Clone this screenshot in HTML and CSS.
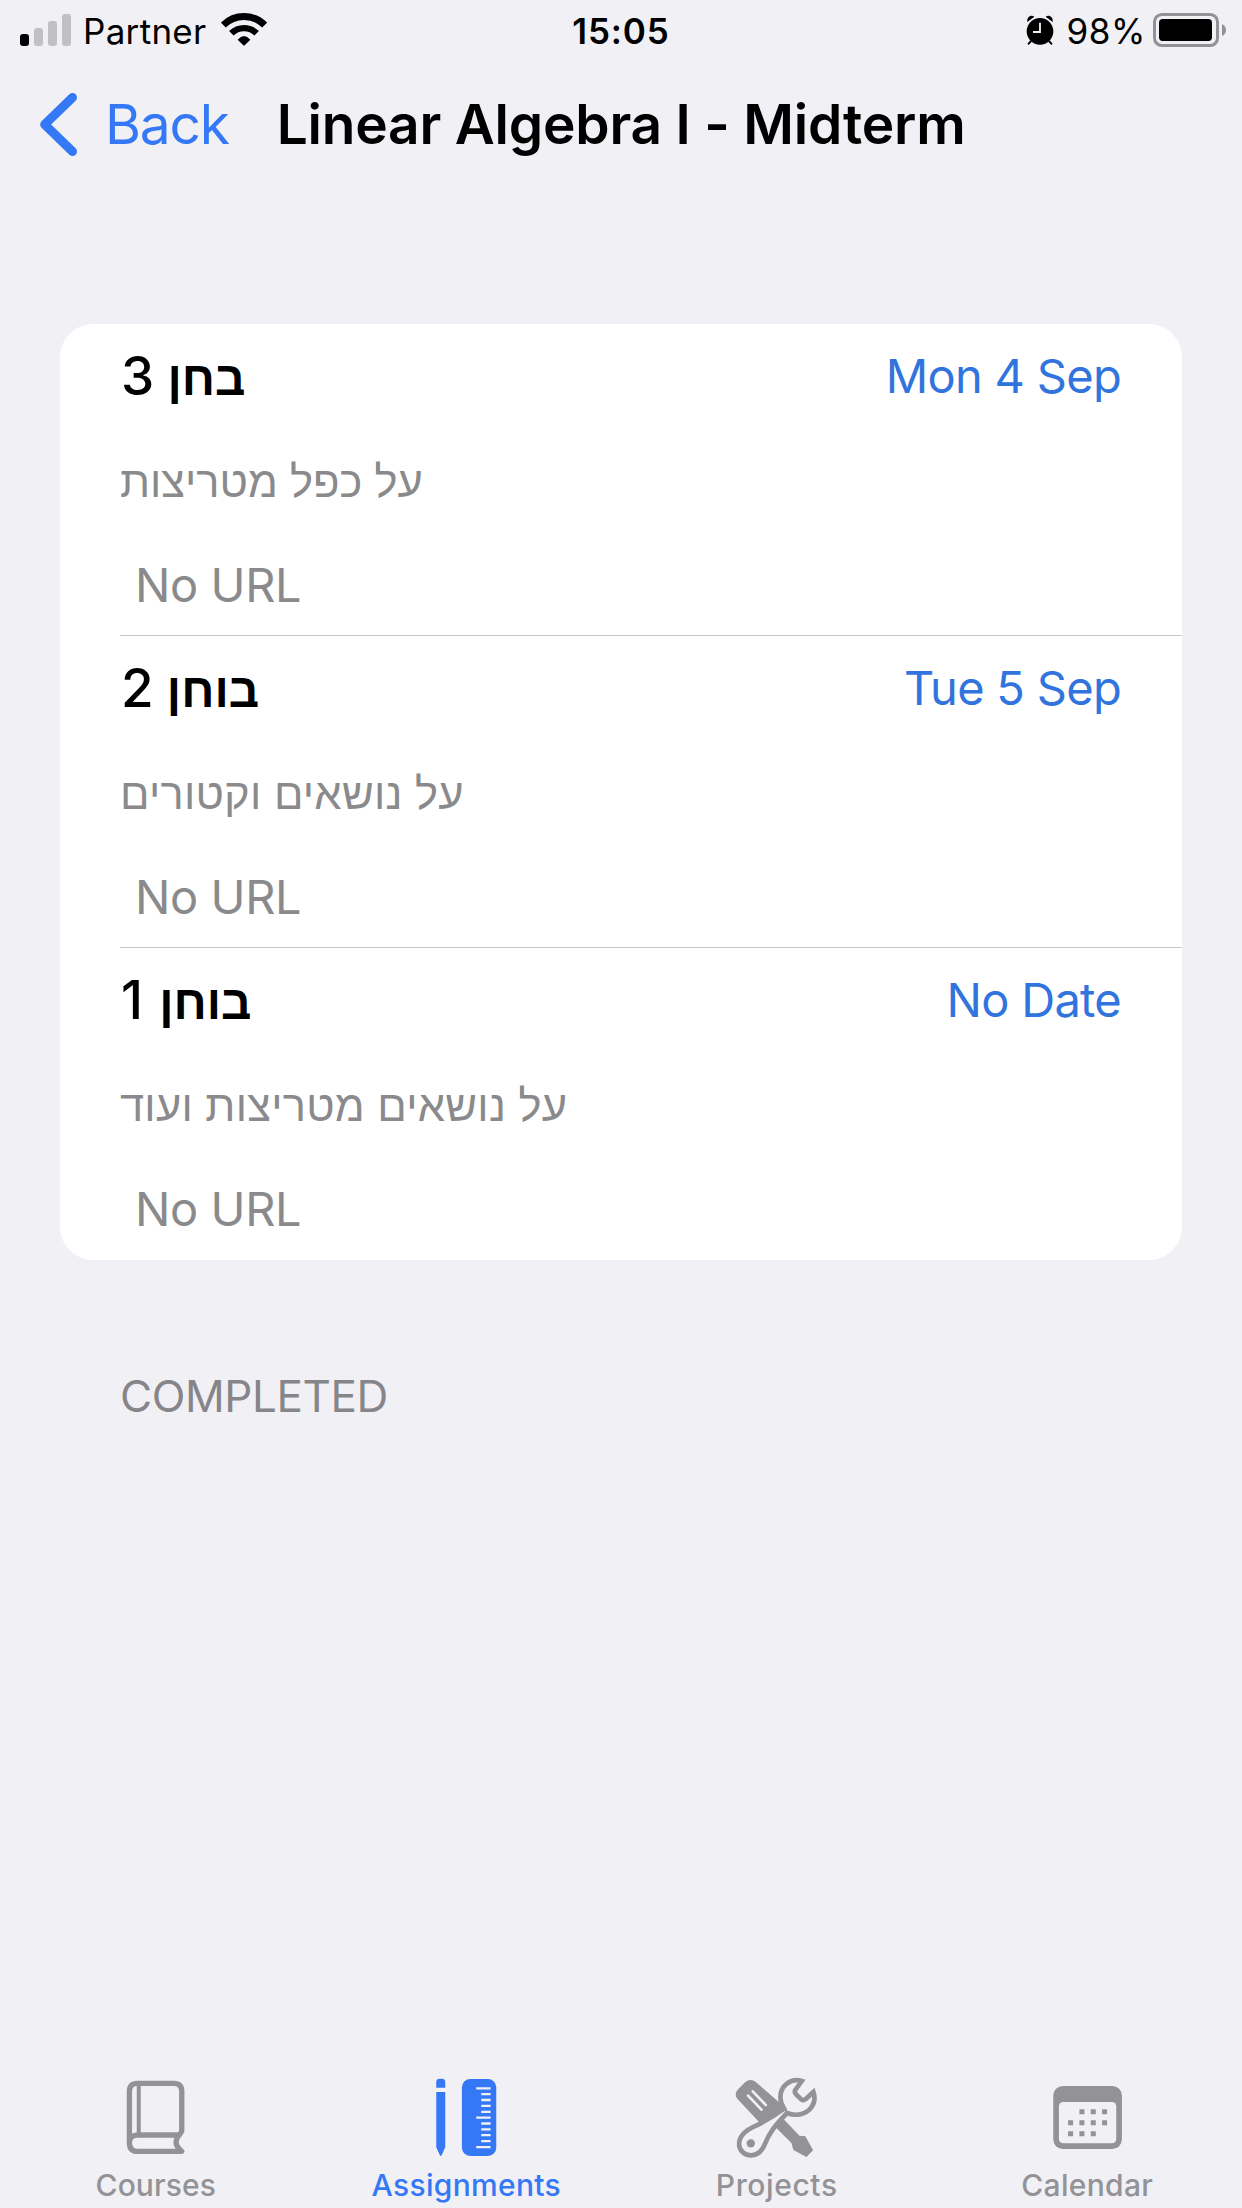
FILE: index.html
```html
<!DOCTYPE html>
<html lang="en">
<head>
<meta charset="utf-8">
<title>Linear Algebra I - Midterm</title>
<link rel="stylesheet" href="styles.css">
</head>
<body>
<div class="screen">
  <div class="status">
    <div class="status-left">
      <svg class="signal" viewBox="60 42 153 96" width="51" height="32">
        <rect x="60" y="102" width="27" height="36" rx="9"/>
        <g fill="#c1c0c5"><rect x="102" y="84" width="27" height="54" rx="9"/><rect x="144" y="63" width="27" height="75" rx="9"/><rect x="186" y="42" width="27" height="96" rx="9"/></g>
      </svg>
      <span class="carrier">Partner</span>
      <svg class="wifi" viewBox="660 36 138 102" width="46" height="34">
        <g fill="none" stroke="#000"><path d="M667 75A88 88 0 0 1 791 75" stroke-width="21"/><path d="M691 100A54 54 0 0 1 767 100" stroke-width="19"/></g>
        <path d="M710 119Q729 97 748 119L731 136Q729 138 727 136Z"/>
      </svg>
    </div>
    <span class="time">15:05</span>
    <div class="status-right">
      <svg class="alarm" viewBox="376 46 84 90" width="28" height="30">
        <circle cx="418" cy="95" r="40"/>
        <path d="M380 67C378 53 390 44 401 51ZM456 67C458 53 446 44 435 51Z"/>
        <path d="M393 122L384 132M443 122L452 132" stroke="#000" stroke-width="6" stroke-linecap="round"/>
        <path d="M418 69V97H397" fill="none" stroke="#f1f0f5" stroke-width="5.5"/>
      </svg>
      <span class="percent">98%</span>
      <svg class="battery" viewBox="759 39 219 102" width="73" height="34">
        <rect x="763.5" y="43.5" width="189" height="93" rx="22" fill="none" stroke="#929195" stroke-width="9"/>
        <rect x="777" y="57" width="159" height="66" rx="11"/>
        <path d="M966 72Q978 78 978 90T966 108Z" fill="#929195"/>
      </svg>
    </div>
  </div>

  <header class="nav">
    <svg class="chevron" viewBox="120 279 111 189" width="37" height="63"><path d="M217.500 292.500L134 373.500L217.500 454.500"/></svg>
    <span class="back">Back</span>
    <h1 class="title">Linear Algebra I - Midterm</h1>
  </header>

  <main class="content">
    <section class="card">
      <article class="row">
        <div class="row-head"><h2 class="name">בחן <span class="digit">3</span></h2><span class="date">Mon 4 Sep</span></div>
        <p class="desc">על כפל מטריצות</p>
        <p class="url">No URL</p>
      </article>
      <article class="row">
        <div class="row-head"><h2 class="name">בוחן <span class="digit">2</span></h2><span class="date">Tue 5 Sep</span></div>
        <p class="desc loose">על נושאים וקטורים</p>
        <p class="url">No URL</p>
      </article>
      <article class="row">
        <div class="row-head"><h2 class="name">בוחן <span class="digit one">1</span></h2><span class="date">No Date</span></div>
        <p class="desc loose">על נושאים מטריצות ועוד</p>
        <p class="url">No URL</p>
      </article>
    </section>
    <h3 class="section-title">COMPLETED</h3>
  </main>

  <nav class="tabs">
    <div class="tab">
      <svg viewBox="45.750 24 360 288" width="120" height="96">
        <g fill="none" stroke="currentColor" stroke-width="16" stroke-linejoin="round" stroke-linecap="round">
          <path d="M149 248V94Q149 70 173 70H282Q306 70 306 94V212C306 222 289 226 289 247C289 262 298 266 306 274H174Q149 274 149 248C149 233 160 225 174 225H298"/>
          <path d="M177 72V222" stroke-width="12" stroke-linecap="butt"/>
        </g>
      </svg>
      <span class="label">Courses</span>
    </div>
    <div class="tab active">
      <svg viewBox="137.250 24 360 288" width="120" height="96">
        <g fill="currentColor"><path d="M228 83V66Q228 56 238 56H245Q255 56 255 66V83ZM228 96H255V262L244 286Q241.500 290 239 286L228 262Z"/><rect x="305" y="57" width="103" height="231" rx="25"/></g>
        <path d="M348 85H391M363 102.500H391M363 120H391M363 137.500H391M363 155.500H391M348 173H391M363 190.500H391M363 208H391M363 225.500H391M363 243.500H391M348 261.500H391" stroke="#f1f0f5" stroke-width="7"/>
      </svg>
      <span class="label wide">Assignments</span>
    </div>
    <div class="tab">
      <svg viewBox="48.750 24 360 288" width="120" height="96">
        <path fill="currentColor" d="M114 118Q101 103 115 88L136 67Q152 53 169 67L244 132L252 178L299 227L317 229L340 271L320 291L281 270L275 249L226 200L180 188Z"/>
        <path d="M145 107L185 149M159 94L198 135" stroke="#f1f0f5" stroke-width="8" stroke-linecap="round"/>
        <path d="M306 63C272 53 242 78 242 112C242 125 246 136 253 146C234 160 207 178 171 196C137 210 118 226 118 252C118 271 133 286 154 286C179 286 189 269 196 251C207 222 222 200 262 159C290 170 319 163 334 143C347 127 346 111 341 96L318 117Q310 124 302 116L289 103Q282 95 288 88Z" fill="#f1f0f5" stroke="currentColor" stroke-width="14"/>
        <path d="M253 147L264 160" stroke="currentColor" stroke-width="5"/>
        <circle cx="153" cy="250" r="12.500" fill="currentColor"/>
      </svg>
      <span class="label wider">Projects</span>
    </div>
    <div class="tab">
      <svg viewBox="80.250 24 360 288" width="120" height="96">
        <rect x="159" y="78" width="206" height="189" rx="29" fill="currentColor"/>
        <rect x="176" y="126" width="172" height="124" rx="13" fill="#f1f0f5"/>
        <path d="M245 148V163M279 148V163M313 148V163M211 181V196M245 181V196M279 181V196M313 181V196M211 214V229M245 214V229M279 214V229" stroke="currentColor" stroke-width="15"/>
      </svg>
      <span class="label wide">Calendar</span>
    </div>
  </nav>
</div>
</body>
</html>
```
FILE: styles.css
```css
* { box-sizing: border-box; margin: 0; padding: 0; }
body { background: #f1f0f5; color: #000; font-family: Inter, "Liberation Sans", sans-serif; }
svg { display: block; flex: none; }
.screen { width: 1242px; height: 2208px; display: flex; flex-direction: column; background: #f1f0f5; }

.status { height: 62px; display: grid; grid-template-columns: 1fr auto 1fr; padding: 0 16px 0 20px; font-size: 35px; line-height: 62px; }
.status-left, .status-right { display: flex; align-items: flex-start; }
.status-right { justify-content: flex-end; }
.signal { margin-top: 14px; }
.carrier { margin-left: 12px; letter-spacing: .3px; }
.wifi { margin: 12px 0 0 14px; }
.time { font-weight: 600; letter-spacing: .9px; padding-right: 4px; }
.alarm { margin-top: 15px; }
.percent { margin: 0 7px 0 12px; letter-spacing: .6px; }
.battery { margin-top: 13px; }

.nav { height: 124px; display: flex; align-items: center; padding-left: 40px; font-size: 55px; line-height: 124px; }
.chevron { fill: none; stroke: #3478f6; stroke-width: 27; stroke-linecap: round; stroke-linejoin: round; }
.back { margin-left: 28px; color: #3478f6; letter-spacing: -1.2px; }
.title { margin-left: 48px; font-size: 55px; font-weight: 600; letter-spacing: -.2px; white-space: nowrap; }

.content { flex: 1; padding: 138px 60px 0; }
.card { background: #fff; border-radius: 33px; padding-left: 60px; }
.row { height: 312px; padding-right: 61px; border-bottom: 1px solid #c6c6c8; }
.row:last-child { border-bottom: 0; }
.row-head { display: flex; justify-content: space-between; height: 104px; line-height: 104px; }
.name { font-family: "Liberation Sans", sans-serif; font-size: 47.500px; font-weight: 700; line-height: 105px; padding-left: 1px; }
.digit { font-family: Inter, sans-serif; font-size: 53px; font-weight: 500; }
.one { padding-right: 3px; }
.date { font-size: 47px; color: #3174de; letter-spacing: -.7px; }
.desc { font-family: "Liberation Sans", sans-serif; font-size: 43.500px; line-height: 108px; color: #8a8a8c; }
.loose { letter-spacing: .25px; }
.url { padding-left: 15px; font-size: 47px; line-height: 98px; letter-spacing: -.4px; color: #8a8a8c; }
.section-title { margin: 106px 0 0 60px; font-size: 44px; font-weight: 400; line-height: 60px; letter-spacing: -.4px; color: #86858a; }

.tabs { height: 140px; display: grid; grid-template-columns: repeat(4, 1fr); }
.tab { display: flex; flex-direction: column; align-items: center; color: #929297; }
.active { color: #3478f6; }
.label { padding-left: 1px; font-size: 30px; font-weight: 500; line-height: 43px; letter-spacing: .1px; }
.wide { letter-spacing: .3px; }
.wider { letter-spacing: .6px; }
```
